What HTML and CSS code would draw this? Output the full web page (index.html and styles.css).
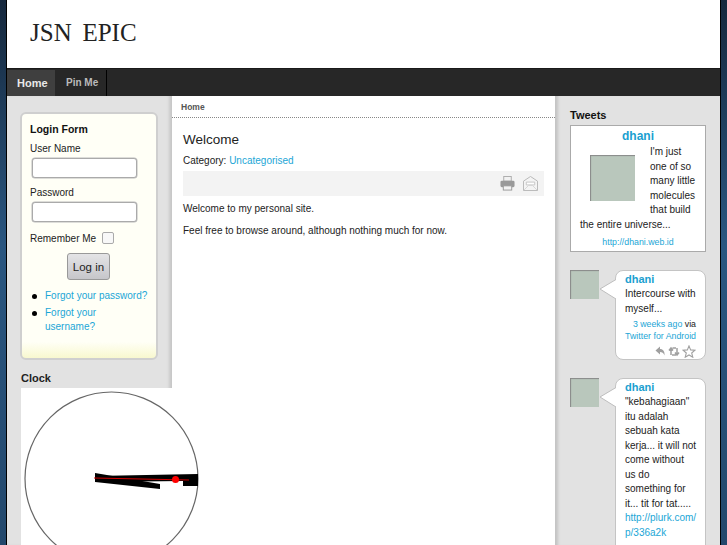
FILE: index.html
```
<!DOCTYPE html>
<html lang="en">
<head>
<meta charset="utf-8">
<title>JSN Epic</title>
<link rel="stylesheet" href="styles.css">
</head>
<body>
<div class="page">
  <header class="header"><span class="logo">JSN EPIC</span></header>
  <nav class="nav">
    <a class="nav-item active">Home</a>
    <a class="nav-item">Pin Me</a>
  </nav>
  <div class="columns">
    <aside class="left">
      <div class="login">
        <h3 class="login-title">Login Form</h3>
        <label class="lbl">User Name</label>
        <div class="field"></div>
        <label class="lbl lbl-pass">Password</label>
        <div class="field"></div>
        <div class="remember"><span class="remember-text">Remember Me</span><span class="check"></span></div>
        <div class="btn-row"><span class="btn">Log in</span></div>
        <ul class="links">
          <li><a>Forgot your password?</a></li>
          <li><a>Forgot your<br>username?</a></li>
        </ul>
      </div>
      <h3 class="clock-title">Clock</h3>
      <div class="clock">
        <svg width="178" height="178" viewBox="0 0 178 178">
          <circle cx="90.500" cy="90.500" r="86.500" fill="none" stroke="#666" stroke-width="1.200"/>
          <polygon points="74,85 139,96 139,101 74,94" fill="#000"/>
          <polygon points="74,88 177,86 177,98 162,98 162,93 74,94" fill="#000"/>
          <line x1="73" y1="90" x2="168" y2="92" stroke="#d00000" stroke-width="1.200"/>
          <circle cx="154.500" cy="91.500" r="3.500" fill="#f00"/>
        </svg>
      </div>
    </aside>
    <main class="main">
      <div class="crumb">Home</div>
      <div class="article">
        <h2 class="article-title">Welcome</h2>
        <p class="category">Category: <a>Uncategorised</a></p>
        <div class="tools">
          <svg width="15" height="15" viewBox="0 0 16 16">
            <rect x="4" y="0.500" width="8" height="5" fill="#f2f2f2" stroke="#aaa"/>
            <rect x="0.500" y="5" width="15" height="7" rx="1.500" fill="#999"/>
            <rect x="3.500" y="10.500" width="9" height="4.500" fill="#f2f2f2" stroke="#999"/>
          </svg>
          <svg width="15" height="15" viewBox="0 0 16 16">
            <path d="M.5 5.500 8 .5l7.500 5v10H.5z" fill="#f4f4f4" stroke="#b5b5b5"/>
            <path d="M3.500 6.500h9v3h-9z" fill="#fff" stroke="#c4c4c4"/>
            <path d="M1 15 6 10h4l5 5" fill="none" stroke="#d4d4d4"/>
          </svg>
        </div>
        <p class="para">Welcome to my personal site.</p>
        <p class="para">Feel free to browse around, although nothing much for now.</p>
      </div>
    </main>
    <aside class="right">
      <h3 class="tweets-title">Tweets</h3>
      <div class="profile">
        <a class="profile-name">dhani</a>
        <div class="profile-body"><span class="avatar-big"></span>I'm just one of so many little molecules that build the entire universe...</div>
        <a class="profile-url">http://dhani.web.id</a>
      </div>
      <div class="tweet">
        <span class="avatar"></span>
        <div class="bubble">
          <svg class="arrow" width="17" height="22" viewBox="0 0 17 22"><path d="M17 .5 1 10l16 10" fill="#fff" stroke="#bdbdbd"/></svg>
          <a class="tw-name">dhani</a>
          <p class="tw-text">Intercourse with<br>myself...</p>
          <p class="tw-meta"><a>3 weeks ago</a> via<br><a>Twitter for Android</a></p>
          <div class="tw-actions">
            <svg width="11" height="12" viewBox="0 0 11 11"><path d="M5 1 0.500 5 5 9V6.500c2 0 3.500.8 4.500 3.500 .5-4-1.500-6.500-4.500-6.500z" fill="#a0a0a0"/></svg>
            <svg width="12" height="11" viewBox="0 0 12 11"><path d="M3 9V3M1 4.500 3 2l2 2.500M9 2v6M7 6.500 9 9l2-2.500M4 9h4M4.500 2H8" fill="none" stroke="#a0a0a0" stroke-width="1.500"/></svg>
            <svg width="14" height="13" viewBox="0 0 13 12"><path d="M6.500.8 8 4.500l4 .3-3 2.600 1 3.900-3.500-2.100L3 11.300l1-3.900-3-2.600 4-.3z" fill="#fff" stroke="#a0a0a0"/></svg>
          </div>
        </div>
      </div>
      <div class="tweet">
        <span class="avatar"></span>
        <div class="bubble bubble-open">
          <svg class="arrow" width="17" height="22" viewBox="0 0 17 22"><path d="M17 .5 1 10l16 10" fill="#fff" stroke="#bdbdbd"/></svg>
          <a class="tw-name">dhani</a>
          <p class="tw-text">"kebahagiaan"<br>itu adalah<br>sebuah kata<br>kerja... it will not<br>come without<br>us do<br>something for<br>it... tit for tat.....<br><a>http://plurk.com/<br>p/336a2k</a></p>
        </div>
      </div>
    </aside>
  </div>
</div>
</body>
</html>
```
FILE: styles.css
```
html, body {
  margin: 0;
  padding: 0;
  height: 545px;
  overflow: hidden;
}
body {
  background: linear-gradient(180deg, #16283d 0%, #2a5680 45%, #23486c 100%);
  font-family: "Liberation Sans", Arial, sans-serif;
  font-size: 10px;
  line-height: 14.500px;
  color: #222;
}
a { color: #1ba6d6; text-decoration: none; }
h2, h3, p, ul { margin: 0; padding: 0; }

.page {
  width: 713px;
  margin-left: 7px;
  height: 545px;
  background: #e2e2e2;
  box-shadow: -1px 0 0 #000, 1px 0 0 #000;
  overflow: hidden;
}
.header {
  height: 68px;
  background: #fff;
  box-sizing: border-box;
  padding: 18px 0 0 23px;
}
.logo {
  font-family: "Liberation Serif", "Times New Roman", serif;
  font-size: 25px;
  line-height: 30px;
  word-spacing: 4.500px;
  color: #222;
  display: block;
}
.nav {
  display: flex;
  height: 28px;
  background: #272727;
  border-top: 1px solid #1a1a1a;
  box-sizing: border-box;
}
.nav-item {
  box-sizing: border-box;
  height: 26px;
  margin-top: 1px;
  width: 51px;
  margin-left: 1px;
  padding-left: 10px;
  font-weight: bold;
  font-size: 10px;
  line-height: 26px;
  white-space: nowrap;
  color: #bbb;
  border-right: 1px solid #000;
}
.nav-item.active {
  background: #3f3f3f;
  color: #e8e8e8;
  font-size: 11px;
  border-right: 0;
  width: 48px;
  margin-left: 0;
}

.columns {
  display: flex;
  height: 449px;
}
.left {
  width: 165px;
  box-sizing: border-box;
  padding: 16px 0 0 13px;
  flex: none;
  box-shadow: inset -4px 0 3px -1px #c9c9c9;
  position: relative;
}
.login {
  width: 138px;
  height: 248px;
  box-sizing: border-box;
  border: 2px solid #cfcfcf;
  border-radius: 6px;
  background: linear-gradient(180deg, #fffff6 0, #fffff6 228px, #f8f8cf 100%);
  padding: 8px 0 0 8px;
}
.login-title {
  font-size: 10.500px;
  line-height: 15px;
  color: #111;
}
.lbl {
  display: block;
  margin-top: 5px;
  line-height: 14px;
}
.lbl-pass { margin-top: 8px; }
.field {
  width: 105px;
  height: 20px;
  box-sizing: border-box;
  margin: 2px 0 0 2px;
  border: 1px solid #aaa;
  box-shadow: 0 0 0 0.500px #bbb;
  border-radius: 3px;
  background: #fff;
}
.remember {
  display: flex;
  align-items: flex-start;
  gap: 6px;
  margin-top: 10px;
  height: 12px;
}
.remember-text { line-height: 14px; }
.check {
  width: 12px;
  height: 12px;
  box-sizing: border-box;
  border: 1px solid #aaa;
  border-radius: 2px;
  background: #f8f8f8;
}
.btn-row {
  display: flex;
  margin-top: 9px;
  padding-left: 37px;
}
.btn {
  width: 43px;
  height: 27px;
  box-sizing: border-box;
  border: 1px solid #999;
  border-radius: 3px;
  background: linear-gradient(180deg, #e4e4e6, #c6c6ca);
  font-size: 11.500px;
  line-height: 26px;
  text-align: center;
  color: #222;
}
.links {
  margin-top: 9px;
  list-style: none;
}
.links li {
  display: flex;
  gap: 8.500px;
  margin-bottom: 2px;
}
.links li::before {
  content: "";
  flex: none;
  width: 5px;
  height: 5px;
  margin: 5px 0 0 1.500px;
  border-radius: 50%;
  background: #000;
}
.clock-title {
  margin: 11px 0 3px 1px;
  font-size: 11px;
  line-height: 14px;
  color: #222;
}
.clock {
  width: 178px;
  height: 178px;
  margin-left: 1px;
  background: #fff;
  position: relative;
  z-index: 2;
}
.clock svg { display: block; }

.main {
  width: 383px;
  flex: none;
  background: #fff;
  box-sizing: border-box;
  padding-top: 1px;
  box-shadow: -1px 0 0 #bbb;
}
.crumb {
  height: 21px;
  box-sizing: border-box;
  padding: 3px 0 0 9px;
  font-size: 8.500px;
  font-weight: bold;
  color: #555;
  border-bottom: 1px dotted #888;
}
.article { padding: 13px 11px 0 11px; }
.article-title {
  font-size: 13.500px;
  font-weight: normal;
  line-height: 18px;
  color: #222;
}
.category {
  margin-top: 4px;
  line-height: 15px;
}
.tools {
  display: flex;
  justify-content: flex-end;
  align-items: center;
  gap: 8px;
  height: 25px;
  margin-top: 3px;
  padding-right: 6px;
  background: #f3f3f3;
}
.para {
  margin-top: 6px;
  line-height: 14px;
  margin-bottom: 8px;
}
.para + .para { margin-top: 0; }

.right {
  flex: 1;
  box-sizing: border-box;
  padding: 12px 14px 0 15px;
  box-shadow: inset 5px 0 3px -2px #c4c4c4;
}
.tweets-title {
  font-size: 11px;
  line-height: 14px;
  color: #111;
}
.profile {
  box-sizing: border-box;
  width: 136px;
  height: 127px;
  margin-top: 3px;
  padding: 3px 9px 0;
  background: #fff;
  border: 1px solid #aaa;
}
.profile-name {
  display: block;
  text-align: center;
  font-size: 12px;
  font-weight: bold;
  line-height: 14px;
  color: #1a9fd0;
}
.profile-body {
  margin-top: 2px;
  height: 89px;
}
.avatar-big {
  float: left;
  width: 45px;
  height: 46px;
  margin: 10px 15px 3px 10px;
  background: #b9c7bc;
  box-shadow: inset 1px 1px 1px #888;
}
.profile-url {
  display: block;
  text-align: center;
  font-size: 8.800px;
  line-height: 14px;
  margin-top: 1px;
}
.tweet {
  display: flex;
  gap: 16px;
  margin-top: 18px;
}
.avatar {
  width: 29px;
  height: 29px;
  flex: none;
  background: #b9c7bc;
  box-shadow: inset 1px 1px 1px #888;
}
.bubble {
  position: relative;
  box-sizing: border-box;
  width: 91px;
  padding: 1px 8px 0 9px;
  background: #fff;
  border: 1px solid #c4c4c4;
  border-radius: 8px;
  white-space: nowrap;
}
.bubble-open { min-height: 200px; }
.arrow {
  position: absolute;
  left: -17px;
  top: 8px;
}
.tw-name {
  display: block;
  font-weight: bold;
  font-size: 11px;
  line-height: 14px;
  color: #1a9fd0;
}
.tw-text { margin-top: 1px; }
.tw-meta {
  margin: 1px 1px 0 0;
  text-align: right;
  font-size: 8.800px;
  line-height: 12px;
  padding-top: 1px;
}
.tw-actions {
  display: flex;
  justify-content: flex-end;
  align-items: center;
  gap: 2px;
  height: 16px;
  margin-top: 1px;
  margin-right: 1px;
}
```
